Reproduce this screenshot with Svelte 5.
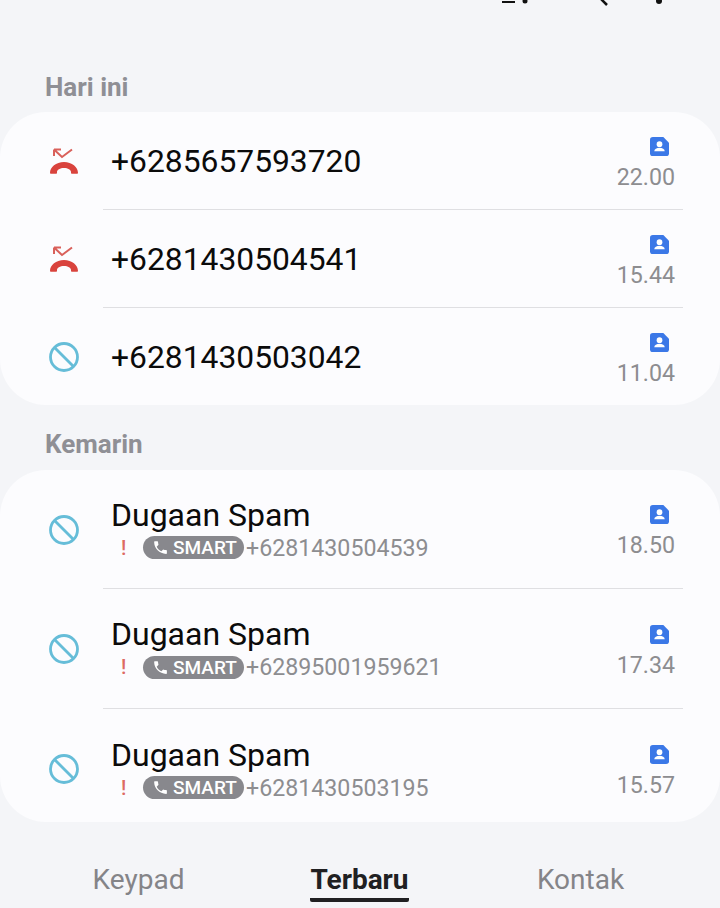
<script>
  const today = [
    { kind: 'missed', number: '+6285657593720', time: '22.00' },
    { kind: 'missed', number: '+6281430504541', time: '15.44' },
    { kind: 'blocked', number: '+6281430503042', time: '11.04' }
  ];
  const yesterday = [
    { number: '+6281430504539', time: '18.50' },
    { number: '+62895001959621', time: '17.34' },
    { number: '+6281430503195', time: '15.57' }
  ];
  const phone = 'M6.600 10.800c1.400 2.800 3.800 5.100 6.600 6.600l2.200-2.200c.3-.3.7-.4 1-.2 1.100.4 2.300.6 3.600.6.600 0 1 .4 1 1V20c0 .6-.4 1-1 1C10.600 21 3 13.400 3 4c0-.6.400-1 1-1h3.500c.6 0 1 .4 1 1 0 1.300.2 2.500.6 3.600.1.300 0 .7-.2 1z';
</script>

{#snippet contactIcon()}
  <svg class="contact" viewBox="0 0 20 20" width="19" height="19">
    <path d="M3 0h11l6 6v11a3 3 0 0 1-3 3H3a3 3 0 0 1-3-3V3a3 3 0 0 1 3-3z" fill="#3b78e7" />
    <circle cx="10" cy="7.500" r="3" fill="#fff" />
    <path d="M4.500 15c0-2.500 2.500-3.800 5.500-3.800s5.500 1.300 5.500 3.800z" fill="#fff" />
  </svg>
{/snippet}

{#snippet blockedIcon()}
  <svg class="kind" viewBox="0 0 32 32" width="32" height="32">
    <circle cx="16" cy="16" r="13.500" fill="none" stroke="#66bdd8" stroke-width="2.800" />
    <path d="M6.500 6.500l19 19" fill="none" stroke="#66bdd8" stroke-width="2.800" />
  </svg>
{/snippet}

{#snippet missedIcon()}
  <svg class="kind" viewBox="0 0 32 32" width="32" height="32">
    <path d="M2 28c0-6 6-11 14-11s14 5 14 11c0 .5-.3.800-.8.800h-5.400c-.5 0-.8-.3-.8-.8v-1c0-2-3-4-7-4s-7 2-7 4v1c0 .5-.3.800-.8.800H2.800c-.5 0-.8-.3-.8-.8z" fill="#d9433d" />
    <path d="M6 4.500l8 7.500 10-7.500M6 4.500h7M6 4.500v6.500" fill="none" stroke="#d9605a" stroke-width="2" />
  </svg>
{/snippet}

<div class="page">
  <div class="toolbar">
    <svg viewBox="0 0 720 6" width="720" height="6">
      <path d="M502 2h13" stroke="#111" stroke-width="2" />
      <circle cx="525" cy="1" r="2.500" fill="#111" />
      <path d="M600 -2l7 7" stroke="#111" stroke-width="2.500" />
      <circle cx="659" cy="1" r="3" fill="#111" />
    </svg>
  </div>

  <h2 class="label first">Hari ini</h2>
  <div class="card">
    {#each today as call}
      <div class="row short">
        {#if call.kind === 'missed'}
          {@render missedIcon()}
        {:else}
          {@render blockedIcon()}
        {/if}
        <div class="body">
          <div class="name">{call.number}</div>
          <div class="meta">
            {@render contactIcon()}
            <span class="time">{call.time}</span>
          </div>
        </div>
      </div>
    {/each}
  </div>

  <h2 class="label">Kemarin</h2>
  <div class="card spam">
    {#each yesterday as call}
      <div class="row tall">
        {@render blockedIcon()}
        <div class="body">
          <div class="info">
            <div class="name">Dugaan Spam</div>
            <div class="sub">
              <span class="warn">!</span>
              <span class="badge">
                <svg viewBox="0 0 24 24" width="17" height="17"><path d={phone} fill="#fff" /></svg>
                SMART
              </span>
              <span class="number">{call.number}</span>
            </div>
          </div>
          <div class="meta">
            {@render contactIcon()}
            <span class="time">{call.time}</span>
          </div>
        </div>
      </div>
    {/each}
  </div>

  <nav class="tabs">
    <span class="tab">Keypad</span>
    <span class="tab active">Terbaru</span>
    <span class="tab">Kontak</span>
  </nav>
</div>

<style>
  :global(body) {
    margin: 0;
    background: #f4f5f8;
  }

  .page {
    width: 720px;
    height: 908px;
    overflow: hidden;
    background: #f4f5f8;
    font-family: Roboto, "Liberation Sans", sans-serif;
  }

  .toolbar {
    height: 6px;
    line-height: 0;
  }

  .label {
    margin: 0;
    padding: 0 0 0 45px;
    height: 38px;
    font-size: 26px;
    line-height: 38px;
    font-weight: 700;
    color: #8f8f95;
  }

  .label.first {
    margin-top: 62px;
    margin-bottom: 6px;
  }

  .label:not(.first) {
    margin-top: 20px;
    margin-bottom: 7px;
  }

  .card {
    background: #fcfcfe;
    border-radius: 46px;
    padding: 0 37px 0 48px;
  }

  .card.spam {
    height: 352px;
    overflow: hidden;
  }

  .row {
    display: flex;
    align-items: center;
  }

  .row.short {
    height: 98px;
  }

  .row.tall {
    height: 120px;
  }

  .row.short:last-child {
    height: 97px;
  }

  .row.tall:first-child {
    height: 119px;
  }

  .kind {
    flex: none;
  }

  .body {
    flex: 1;
    height: 100%;
    margin-left: 23px;
    padding: 0 8px;
    display: flex;
    align-items: center;
    justify-content: space-between;
    box-sizing: border-box;
    border-bottom: 1px solid #dfdfe2;
  }

  .row:last-child .body {
    border-bottom: none;
  }

  .name {
    font-size: 31.800px;
    line-height: 38px;
    color: #0b0b0b;
  }

  .info {
    display: flex;
    flex-direction: column;
    gap: 1px;
    padding-bottom: 2px;
  }

  .info .name {
    font-size: 32px;
  }

  .sub {
    display: flex;
    align-items: center;
    height: 26px;
    font-size: 23.200px;
    color: #8d8d90;
  }

  .warn {
    width: 32px;
    font-size: 20px;
    font-weight: 500;
    color: #dd6a62;
    text-align: left;
    padding-left: 10px;
    box-sizing: border-box;
  }

  .badge {
    display: inline-flex;
    align-items: center;
    gap: 4px;
    height: 23px;
    width: 101px;
    box-sizing: border-box;
    padding-left: 9px;
    border-radius: 12px;
    background: #88888d;
    color: #fff;
    font-size: 19px;
    font-weight: 500;
  }

  .number {
    margin-left: 2px;
  }

  .meta {
    display: flex;
    flex-direction: column;
    align-items: flex-end;
    gap: 7px;
    margin-top: 7px;
  }

  .contact {
    margin-right: 6px;
  }

  .time {
    font-size: 23.200px;
    line-height: 29px;
    color: #8d8d90;
  }

  .tabs {
    display: grid;
    grid-template-columns: repeat(3, 221px);
    margin: 42px 0 0 0;
    padding: 0 28px;
    justify-items: center;
    align-items: start;
  }

  .tab {
    font-size: 28px;
    line-height: 32px;
    color: #848488;
    padding-bottom: 2px;
  }

  .tab.active {
    font-weight: 700;
    color: #202022;
    border-bottom: 4px solid #202022;
    border-radius: 2px;
  }
</style>
